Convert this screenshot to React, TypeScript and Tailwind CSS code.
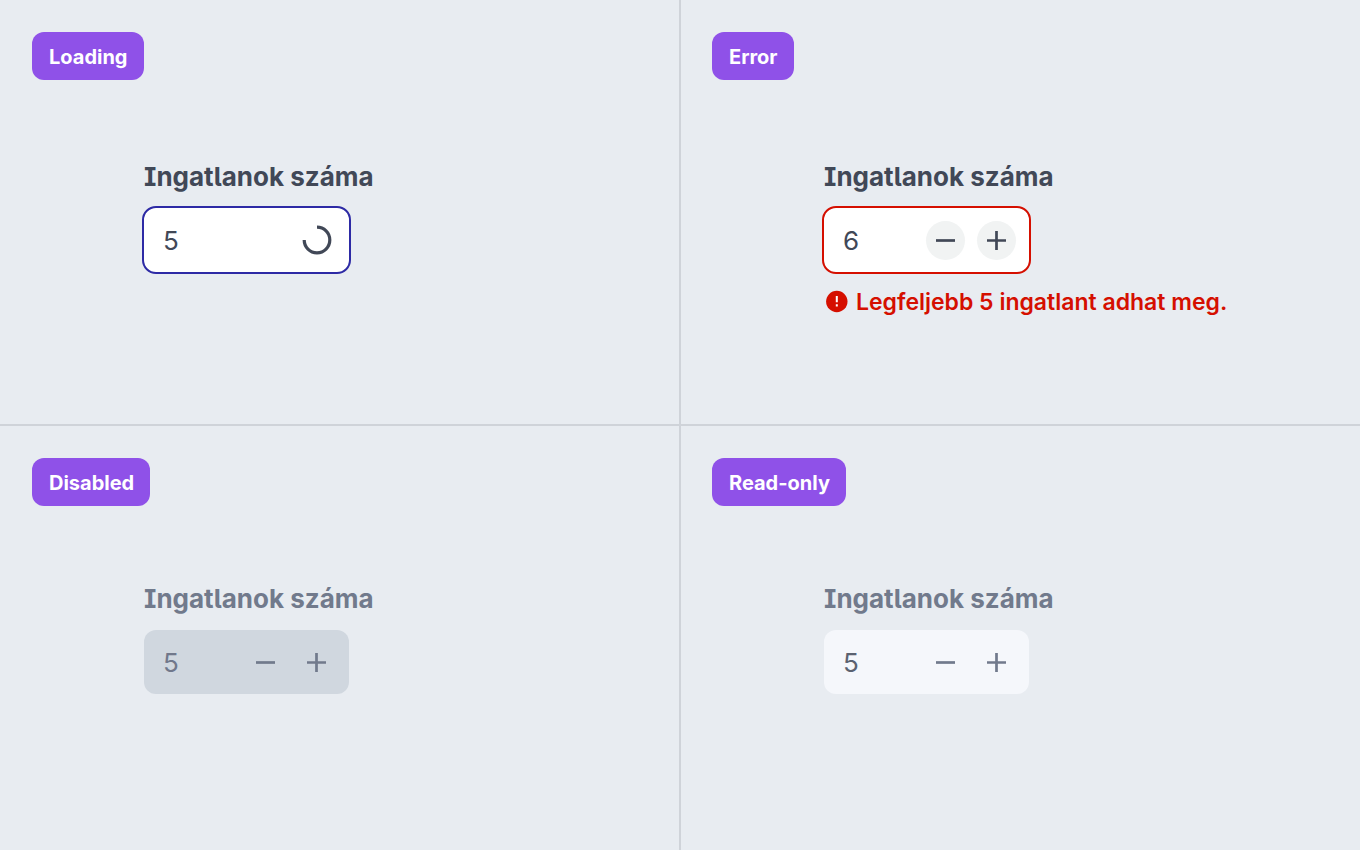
import { useId } from "react";

type FieldState = "loading" | "error" | "disabled" | "readonly";

interface NumberFieldProps {
    label: string;
    value: number;
    state: FieldState;
    error?: string;
}

const boxStyles: Record<FieldState, string> = {
    loading: "bg-white text-[#414857] outline-2 outline-[#2d2aa5]",
    error: "bg-white text-[#414857] outline-2 outline-[#d50f00]",
    disabled: "bg-[#d0d7df] text-[#71788b]",
    readonly: "bg-[#f5f7fb] text-[#5b6270]",
};

const Spinner = () => (
    <svg viewBox="0 0 32 32" className="size-8" fill="none" stroke="#414857" strokeWidth="3.2" aria-label="Loading">
        <path d="M16 3.2A12.8 12.8 0 1 1 3.2 16" />
    </svg>
);

const StepButton = ({ kind, state }: { kind: "minus" | "plus"; state: FieldState }) => {
    const active = state === "error";

    return (
        <button
            type="button"
            disabled={!active}
            aria-label={kind === "minus" ? "Decrease" : "Increase"}
            className={`flex size-[39px] items-center justify-center rounded-full ${active ? "bg-[#f1f3f3] text-[#414857]" : "text-[#717a8c]"}`}
        >
            <svg viewBox="0 0 19 19" className="size-[19px]" fill="none" stroke="currentColor" strokeWidth="2.7">
                <path d={kind === "minus" ? "M0 9.5h19" : "M0 9.5h19M9.5 0v19"} />
            </svg>
        </button>
    );
};

const NumberField = ({ label, value, state, error }: NumberFieldProps) => {
    const id = useId();
    const muted = state === "disabled" || state === "readonly";

    return (
        <div className="ml-28">
            <label
                htmlFor={id}
                className={`block text-[26px] leading-8 font-bold [font-feature-settings:'ss02'] ${muted ? "text-[#717a8c]" : "text-[#414857]"}`}
            >
                {label}
            </label>

            <div className={`mt-[15px] flex h-16 w-[205px] items-center rounded-xl pr-[13px] pl-[19px] ${boxStyles[state]}`}>
                <input
                    id={id}
                    type="text"
                    inputMode="numeric"
                    defaultValue={value}
                    disabled={state === "disabled"}
                    readOnly={state === "readonly" || state === "loading"}
                    className="w-0 min-w-0 flex-1 bg-transparent pt-px text-[26px] leading-8 outline-none"
                />
                {state === "loading" ? (
                    <div className="mr-[3px]">
                        <Spinner />
                    </div>
                ) : (
                    <div className="flex gap-3">
                        <StepButton kind="minus" state={state} />
                        <StepButton kind="plus" state={state} />
                    </div>
                )}
            </div>

            {error && (
                <p className="mt-4 flex items-center gap-2 text-[23px] leading-7 font-semibold text-[#d50f00]">
                    <svg viewBox="0 0 24 24" className="size-6 shrink-0">
                        <circle cx="12.8" cy="11.5" r="10.7" fill="currentColor" />
                        <path d="M12.8 6v6.2M12.8 14.2v2.3" stroke="white" strokeWidth="2" />
                    </svg>
                    {error}
                </p>
            )}
        </div>
    );
};

const Badge = ({ children }: { children: string }) => (
    <h2 className="h-12 w-fit rounded-xl bg-[#8f51e8] pt-px pr-4 pl-[17px] text-[20px] leading-12 font-bold text-white">
        {children}
    </h2>
);

export default function App() {
    return (
        <main className="grid min-h-screen grid-cols-2 grid-rows-2 bg-[#e8ecf1] font-['Inter',sans-serif]">
            <section className="flex flex-col gap-[81px] border-r border-b border-[#cfd3d9] p-8">
                <Badge>Loading</Badge>
                <NumberField label="Ingatlanok száma" value={5} state="loading" />
            </section>
            <section className="flex flex-col gap-[81px] border-b border-l border-[#cfd3d9] p-8 pl-[31px]">
                <Badge>Error</Badge>
                <NumberField label="Ingatlanok száma" value={6} state="error" error="Legfeljebb 5 ingatlant adhat meg." />
            </section>
            <section className="flex flex-col gap-[77px] border-t border-r border-[#cfd3d9] p-8">
                <Badge>Disabled</Badge>
                <NumberField label="Ingatlanok száma" value={5} state="disabled" />
            </section>
            <section className="flex flex-col gap-[77px] border-t border-l border-[#cfd3d9] p-8 pl-[31px]">
                <Badge>Read-only</Badge>
                <NumberField label="Ingatlanok száma" value={5} state="readonly" />
            </section>
        </main>
    );
}
